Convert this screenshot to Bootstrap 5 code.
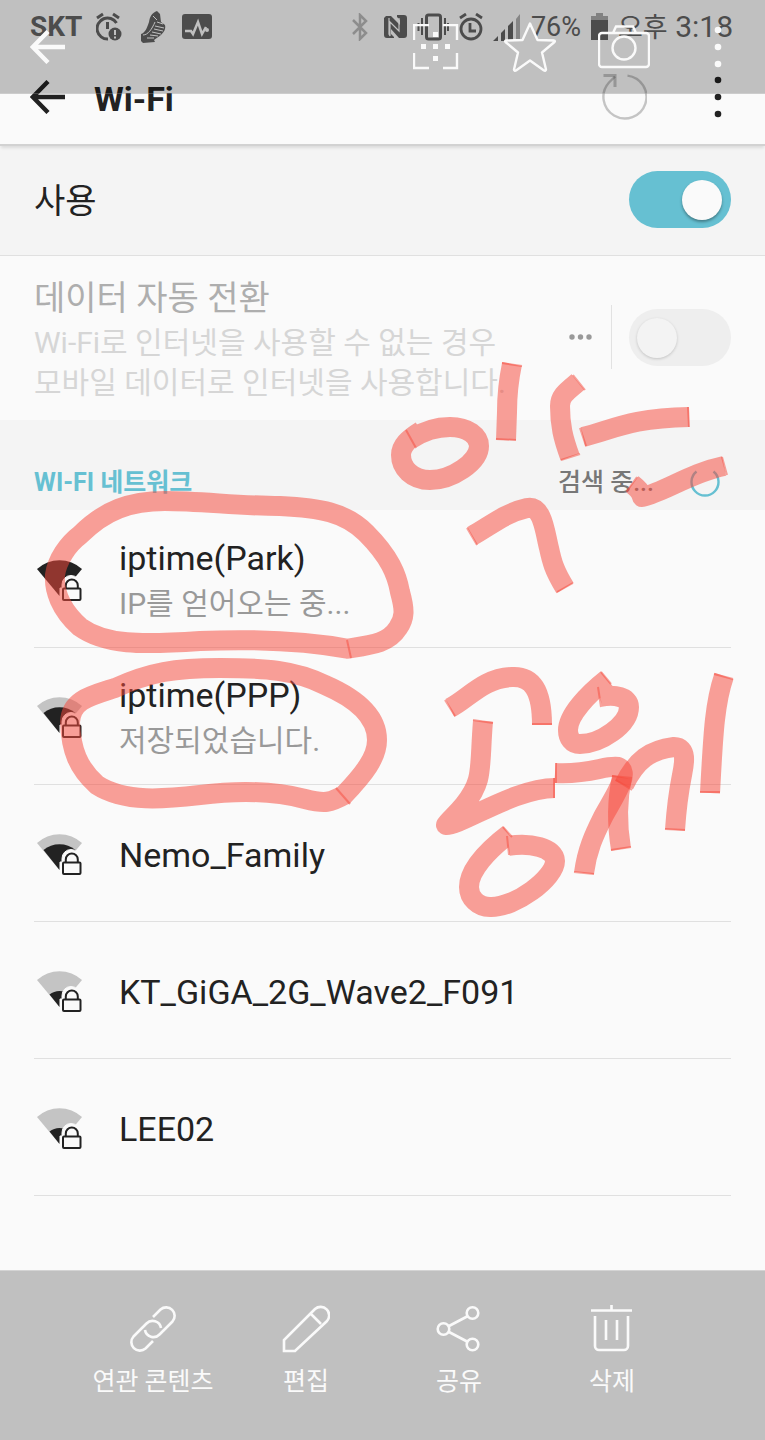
<!DOCTYPE html>
<html lang="ko">
<head>
<meta charset="utf-8">
<meta name="viewport" content="width=device-width, initial-scale=1">
<title>Wi-Fi</title>
<link rel="stylesheet" href="https://cdn.jsdelivr.net/npm/bootstrap@5.3.0/dist/css/bootstrap.min.css">
<style>
  body { font-family: Roboto, "Noto Sans CJK KR", sans-serif; background: #fafafa; color: #222; }
  svg { display: block; flex: none; }
  .status { height: 52px; padding: 2px 32px 0 30px; font-size: 30px; line-height: 50px; color: #646464; }
  .status-group { gap: 10px; }
  .carrier { font-size: 28px; margin-right: 4px; }
  .status-sm { font-size: 27px; }
  .appbar { height: 94px; padding: 0 0 2px 30px; border-bottom: 2px solid #d2d2d2; box-shadow: 0 3px 3px -1px rgba(0,0,0,.1); }
  .appbar h1 { font-size: 34px; line-height: 40px; margin-left: 29px; padding-top: 4px; }
  .viewer-top { height: 94px; padding-left: 30px; background: rgba(0,0,0,.232); z-index: 2; color: #fafafa; border-bottom: 1px solid rgba(255,255,255,.2); }
  .bar-btn { width: 94px; color: inherit; }
  .plain-btn { color: inherit; background: none; border: 0; padding: 0; }
  .main-row { height: 110px; padding: 0 34px 2px; background: #f4f4f4; border-bottom: 1px solid #e0e0e0; }
  .main-row .t-title { padding-top: 3px; }
  .t-title { font-size: 34px; line-height: 46px; }
  .t-sub { font-size: 30px; line-height: 40px; }
  .data-row { height: 164px; padding: 0 34px 2px; }
  .data-row label { padding-top: 4px; }
  .data-row .t-title { color: #aeaeae; }
  .data-row .t-sub { color: #d6d6d6; padding-top: 2px; }
  .split { width: 1px; height: 64px; background: #e2e2e2; margin: 0 17px 0 18px; }
  .form-check-input.toggle { appearance: none; width: 102px; height: 57px; margin: 0; border: 0; border-radius: 29px; background: #eee; position: relative; flex: none; opacity: 1; }
  .toggle::before { content: ""; position: absolute; top: 9px; left: 8px; width: 40px; height: 40px; border-radius: 50%; background: #f3f3f3; box-shadow: 0 1px 3px rgba(0,0,0,.18); }
  .form-check-input.toggle:checked { background: #66c0d2; }
  .toggle:checked::before { left: 53px; background: #fafafa; box-shadow: 0 2px 3px rgba(0,0,0,.35); }
  .section { height: 90px; padding: 35px 34px 0; background: #f4f4f4; font-size: 25px; line-height: 56px; }
  .section h2 { font-size: 25px; line-height: 56px; color: #66c0d2; }
  .searching { color: #777; font-weight: 500; }
  .searching svg { margin: 12px 11px 0 36px; }
  .networks { margin: 0 34px; padding-top: 1px; }
  .net { height: 137px; padding-left: 3px; border-bottom: 1px solid #e0e0e0; }
  .net a { color: inherit; gap: 36px; padding-top: 3px; }
  .net .t-sub { color: #999; line-height: 46px; }
  .viewer-bottom { background: #c0c0c0; height: 170px; padding: 34px 10% 0; border-top: 1px solid #d4d4d4; color: #fafafa; }
  .viewer-bottom .plain-btn { flex: 1 1 0; }
  .viewer-bottom span { font-size: 25px; line-height: 34px; margin-top: 12px; display: block; white-space: nowrap; }
  .ink { z-index: 1; pointer-events: none; }
</style>
</head>
<body>
<svg width="0" height="0" class="position-absolute" aria-hidden="true">
  <defs>
    <symbol id="back" viewBox="0 0 35 34"><path d="M2.8 17H35M18 1.5L2.8 17L18 32.500" fill="none" stroke="currentColor" stroke-width="4.400"/></symbol>
    <symbol id="dots" viewBox="0 0 26 42"><g fill="currentColor"><circle cx="13" cy="4" r="3.300"/><circle cx="13" cy="21" r="3.300"/><circle cx="13" cy="38" r="3.300"/></g></symbol>
    <symbol id="lock" viewBox="0 0 46 42">
      <path d="M25 28V24.500a9 9 0 0 1 18 0V28h2v14H23V28z" fill="#fafafa" stroke="#fafafa"/>
      <rect x="26" y="28.500" width="17.500" height="11.500" rx="1" fill="#fafafa" stroke="#222" stroke-width="2"/>
      <path d="M28.800 28v-2.500a6 6 0 0 1 12 0V28" fill="none" stroke="#222" stroke-width="2"/>
    </symbol>
  </defs>
</svg>

<div class="position-relative d-flex flex-column min-vh-100 overflow-hidden">

  <div class="status d-flex justify-content-between">
    <div class="status-group d-flex align-items-center">
      <strong class="carrier">SKT</strong>
      <svg width="28" height="30" viewBox="0 0 28 30" fill="none" stroke="currentColor" stroke-width="3"><path d="M20.500 11A10.500 10.500 0 1 0 12 27M1 6l6-4M17 2l6 4M11.500 10v7"/><circle cx="19" cy="22" r="6.500" fill="currentColor" stroke="none"/><path d="M19 18v5M19 24.500v2" stroke="#fafafa" stroke-width="2"/></svg>
      <svg width="30" height="34" viewBox="0 0 30 34" class="mx-1" fill="currentColor"><path d="M3 24c4-1 6-6 8-12C12 6 14 3 19 1l3 3 1 8 4 3c1 4-1 7-4 10l-7 5 1 2-12 1-2-2z"/><path d="M17 16l9 2M16 19l9 2M14 22l9 2M12 25l8 1M9 28l7 0M19 12l6 2M15 6l4 4M5 25c5 0 9-6 12-13" stroke="#fafafa" stroke-width="1" fill="none"/></svg>
      <svg width="30" height="26" viewBox="0 0 30 26"><rect width="30" height="25" rx="3" fill="currentColor"/><path d="M3 17h6l2 3 5-12 4 12 4-7" fill="none" stroke="#fafafa" stroke-width="2.500"/><circle cx="25" cy="16" r="2" fill="#fafafa"/></svg>
    </div>
    <div class="status-group d-flex align-items-center">
      <svg width="21" height="28" viewBox="0 0 21 28" fill="none" stroke="#b8b8b8" stroke-width="2.500"><path d="M1 7l13 13-6 6V2l6 6L1 21"/></svg>
      <svg width="24" height="24" viewBox="0 0 24 24"><path fill="currentColor" d="M3 1h5l9 9V5l-3-3V0h7a3 3 0 0 1 3 3v17a3 3 0 0 1-3 3h-5l-8-9v5l3 3v1H4a3 3 0 0 1-3-3V3z"/><path d="M6 3v16l1 2V7l9 9V3" fill="none" stroke="#fafafa" stroke-width="1.200"/></svg>
      <svg width="32" height="28" viewBox="0 0 32 28" fill="none" stroke="currentColor"><rect x="9.500" y="2" width="14" height="24" rx="2" stroke-width="3"/><path d="M5 5v17M1.500 10v8M28 5v17M31 10v8" stroke-width="2"/></svg>
      <svg width="24" height="28" viewBox="0 0 24 28" fill="none" stroke="currentColor" stroke-width="2.800"><circle cx="12" cy="16" r="10"/><path d="M11 10v8h6M1 5l6-4M17 1l6 4"/></svg>
      <svg class="me-n1" width="28" height="27" viewBox="0 0 28 27" fill="currentColor"><path d="M0 27l5-5v5zM8 19l4-4v12H8zM15 12l5-5v20h-5z"/><path d="M23 5l4-5v27h-4z" opacity=".5"/></svg>
      <span class="status-sm">76%</span>
      <svg width="17" height="28" viewBox="0 0 17 28" fill="currentColor"><path d="M5 0h7v3h5v5H0V3h5z" opacity=".55"/><path d="M0 7h17v20H0z"/></svg>
      <span><span class="status-sm">오후</span> 3:18</span>
    </div>
  </div>

  <header class="appbar position-relative d-flex align-items-center">
    <button class="plain-btn" aria-label="뒤로"><svg width="35" height="34"><use href="#back"/></svg></button>
    <h1 class="fw-bold mb-0">Wi-Fi</h1>
    <button class="plain-btn bar-btn ms-auto d-flex justify-content-center" aria-label="새로고침">
      <svg width="46" height="46" viewBox="0 0 46 46" fill="none" stroke="#222" stroke-opacity=".25" stroke-width="2.400"><path d="M26.500 1.600A21.500 21.500 0 1 1 8 8.500L14 2.500"/><path d="M2.500 1.500H14v11.500" stroke-width="3"/></svg>
    </button>
    <button class="plain-btn bar-btn d-flex justify-content-center" aria-label="더보기"><svg width="26" height="42"><use href="#dots"/></svg></button>
  </header>

  <div class="viewer-top position-absolute top-0 start-0 w-100 d-flex align-items-center">
    <button class="plain-btn me-auto" aria-label="갤러리로 돌아가기"><svg width="35" height="34"><use href="#back"/></svg></button>
    <button class="plain-btn bar-btn d-flex justify-content-center" aria-label="영역 선택">
      <svg width="46" height="46" viewBox="0 0 46 46"><path d="M1 16V1h15M30 1h14v15M1 29v15h15M30 44h14V29" fill="none" stroke="currentColor" stroke-width="2.400"/><path d="M20 8h5v5h-5zM8 20h5v5H8zM20 20h5v5h-5zM32 20h5v5h-5zM20 32h5v5h-5z" fill="currentColor"/></svg>
    </button>
    <button class="plain-btn bar-btn d-flex justify-content-center" aria-label="즐겨찾기">
      <svg width="52" height="50" viewBox="0 0 52 50"><path d="M26 1.500l7.500 16.500 16.500.5c1 0 1 1 .5 1.500L38 30.500l4 17c0 1-1 1.500-2 1L26 38.500 12 48.500c-1 .5-2 0-2-1l4-17L1.500 20c-.5-.5-.5-1.500.5-1.500L18.500 18z" fill="none" stroke="currentColor" stroke-width="2.400" stroke-linejoin="round"/></svg>
    </button>
    <button class="plain-btn bar-btn d-flex justify-content-center" aria-label="카메라">
      <svg width="52" height="44" viewBox="0 0 52 44" fill="none" stroke="currentColor" stroke-width="2.400"><path d="M4 8h11l3-6.500h17L38 8h10a3 3 0 0 1 3 3v28a3 3 0 0 1-3 3H4a3 3 0 0 1-3-3V11a3 3 0 0 1 3-3zM15 8h23"/><circle cx="26" cy="23" r="11.500"/></svg>
    </button>
    <button class="plain-btn bar-btn d-flex justify-content-center" aria-label="메뉴"><svg width="26" height="42"><use href="#dots"/></svg></button>
  </div>

  <main class="flex-grow-1">
    <div class="main-row d-flex align-items-center justify-content-between">
      <label class="t-title" for="useWifi">사용</label>
      <input class="form-check-input toggle" type="checkbox" role="switch" id="useWifi" checked>
    </div>

    <div class="data-row d-flex align-items-center">
      <label class="me-auto" for="autoData">
        <span class="t-title d-block">데이터 자동 전환</span>
        <span class="t-sub d-block">Wi-Fi로 인터넷을 사용할 수 없는 경우<br>모바일 데이터로 인터넷을 사용합니다.</span>
      </label>
      <button class="plain-btn" aria-label="자세히"><svg width="24" height="6" viewBox="0 0 24 6" fill="#999"><circle cx="3" cy="3" r="2.700"/><circle cx="11.500" cy="3" r="2.700"/><circle cx="20" cy="3" r="2.700"/></svg></button>
      <div class="split"></div>
      <input class="form-check-input toggle" type="checkbox" role="switch" id="autoData" disabled>
    </div>

    <div class="section d-flex justify-content-between">
      <h2 class="fw-bold mb-0">WI-FI 네트워크</h2>
      <div class="searching d-flex align-items-start"><span>검색 중...</span>
        <svg width="30" height="30" viewBox="0 0 30 30" fill="none" stroke-width="2.400"><path d="M6.500 4.500A13.500 13.500 0 1 0 23.500 4.500" stroke="#66c0d2"/></svg>
      </div>
    </div>

    <ul class="networks list-unstyled mb-0">
      <li class="net"><a href="#" class="d-flex align-items-center h-100 text-decoration-none">
        <svg width="46" height="42" viewBox="0 0 46 42"><path d="M22.500 36L0 9A33 33 0 0 1 45 9z" fill="#222"/><use href="#lock"/></svg>
        <span><span class="t-title d-block">iptime(Park)</span><span class="t-sub d-block">IP를 얻어오는 중...</span></span></a></li>
      <li class="net"><a href="#" class="d-flex align-items-center h-100 text-decoration-none">
        <svg width="46" height="42" viewBox="0 0 46 42"><path d="M22.500 36L0 9A33 33 0 0 1 45 9z" fill="#c4c4c4"/><path d="M22.500 36L6.500 16A25 25 0 0 1 38.500 16z" fill="#222"/><use href="#lock"/></svg>
        <span><span class="t-title d-block">iptime(PPP)</span><span class="t-sub d-block">저장되었습니다.</span></span></a></li>
      <li class="net"><a href="#" class="d-flex align-items-center h-100 text-decoration-none">
        <svg width="46" height="42" viewBox="0 0 46 42"><path d="M22.500 36L0 9A33 33 0 0 1 45 9z" fill="#c4c4c4"/><path d="M22.500 36L6.500 16A25 25 0 0 1 38.500 16z" fill="#222"/><use href="#lock"/></svg>
        <span class="t-title">Nemo_Family</span></a></li>
      <li class="net"><a href="#" class="d-flex align-items-center h-100 text-decoration-none">
        <svg width="46" height="42" viewBox="0 0 46 42"><path d="M22.500 36L0 9A33 33 0 0 1 45 9z" fill="#c4c4c4"/><path d="M22.500 36L12.500 23.500A16 16 0 0 1 32.500 23.500z" fill="#222"/><use href="#lock"/></svg>
        <span class="t-title">KT_GiGA_2G_Wave2_F091</span></a></li>
      <li class="net"><a href="#" class="d-flex align-items-center h-100 text-decoration-none">
        <svg width="46" height="42" viewBox="0 0 46 42"><path d="M22.500 36L0 9A33 33 0 0 1 45 9z" fill="#c4c4c4"/><path d="M22.500 36L12.500 23.500A16 16 0 0 1 32.500 23.500z" fill="#222"/><use href="#lock"/></svg>
        <span class="t-title">LEE02</span></a></li>
    </ul>
  </main>

  <nav class="viewer-bottom d-flex align-items-start">
    <button class="plain-btn"><svg class="mx-auto" width="48" height="48" viewBox="0 0 48 48" fill="none" stroke="currentColor" stroke-width="2.600"><path d="M24 12L31.500 4.500A8.500 8.500 0 0 1 43.500 16.500L30.500 29.500A8.500 8.500 0 0 1 16 25"/><path d="M24 36L16.500 43.500A8.500 8.500 0 0 1 4.500 31.500L17.500 18.500A8.500 8.500 0 0 1 32 23"/></svg><span>연관 콘텐츠</span></button>
    <button class="plain-btn"><svg class="mx-auto" width="48" height="48" viewBox="0 0 48 48" fill="none" stroke="currentColor" stroke-width="2.600"><path d="M2 46V35L33 4a8.500 8.500 0 0 1 12 12L13 46zM29 9l10 10"/></svg><span>편집</span></button>
    <button class="plain-btn"><svg class="mx-auto" width="48" height="48" viewBox="0 0 48 48" fill="none" stroke="currentColor" stroke-width="2.600"><circle cx="8.500" cy="24" r="5.800"/><circle cx="37.500" cy="8" r="5.800"/><circle cx="37.500" cy="39.500" r="5.800"/><path d="M14 21l19-10M14 27l19 10"/></svg><span>공유</span></button>
    <button class="plain-btn"><svg class="mx-auto" width="48" height="48" viewBox="0 0 48 48" fill="none" stroke="currentColor" stroke-width="2.600"><path d="M3 5.500h41M23.500 0v5M7 11v30a4 4 0 0 0 4 4h25a4 4 0 0 0 4-4V11M18 15v20M29 15v20"/></svg><span>삭제</span></button>
  </nav>

  <!-- pen strokes drawn over the list -->
  <svg class="ink position-absolute top-0 start-0" width="765" height="1440" viewBox="0 0 765 1440" fill="none" aria-hidden="true">
    <g stroke="#f6493c" stroke-opacity=".52" stroke-width="20" stroke-linejoin="round">
      <path d="M349 649C300 640 250 639 200 641C140 645 105 645 80 627C60 609 54 590 55 575C57 560 68 544 80 535C105 510 130 501 165 501C200 501 240 506 280 506C320 508 345 512 366 533C390 557 397 575 400 592C405 610 405 618 398 628C388 644 370 645 345 649"/>
      <path d="M343 796C365 773 377 757 377 740C377 715 355 698 325 685C295 670 265 668 220 668C175 668 150 672 115 688C90 696 71 700 70 722C71 750 78 768 97 785C125 803 165 799 200 795C240 790 275 791 305 799C325 804 330 803 346 794"/>
      <path d="M411 439C425 430 438 427 450 427C468 427 479 436 479 446C479 462 452 480 430 480C412 480 401 468 401 455C401 446 408 439 421 431"/>
      <path d="M512 364C507 388 507 400 507 412L506 440"/>
      <path d="M578 382C566 392 560 396 560 406C560 425 563 438 570 457"/>
      <path d="M583 437C612 430 630 418 689 417"/>
      <path d="M632 484C637 488 641 491 642 497C665 492 690 473 724 466"/>
      <path d="M472 536C490 526 505 513 527 508C543 505 545 533 549 548C552 562 554 570 565 588"/>
      <path d="M450 708C468 699 483 678 512 677C532 676 542 690 542 725"/>
      <path d="M483 721C479 770 484 780 464 805C455 816 449 820 446 825C460 826 515 788 555 788"/>
      <path d="M508 846C530 842 555 848 555 861C555 878 515 908 490 907C478 907 469 898 469 887C469 870 488 850 509 834"/>
      <path d="M600 697C615 694 629 697 629 707C629 725 600 744 580 744C572 744 568 738 568 730C568 715 588 694 607 679"/>
      <path d="M555 773C590 775 605 765 618 767C632 772 612 800 603 817C594 835 587 850 584 873"/>
      <path d="M622 777C617 800 617 825 621 849"/>
      <path d="M624 785C636 760 650 750 674 747C688 747 684 765 682 775C678 795 676 815 675 830"/>
      <path d="M724 676C714 705 713 740 710 793"/>
    </g>
    <g stroke="#f6493c" stroke-opacity=".5" stroke-width="2">
      <path d="M347 640l4 18M336 788l14 16M406 430l10 18M502 363l20 3M496 439l20 1M573 375l12 15M561 460l19-6M580 428l6 18M688 407l1 20M637 477l-10 14M722 457l5 18M467 528l10 17M557 592l16-9M445 700l10 16M532 724h20M473 720l20 3M554 778v20M507 836l2 19M503 827l9 10M598 687l3 20M601 672l10 12M556 763v20M574 872l20 2M612 776l20 2M611 850l20-3M616 780l16 10M665 829l20 1M714 674l19 5M700 792h20"/>
    </g>
  </svg>
</div>
<script src="https://cdn.jsdelivr.net/npm/bootstrap@5.3.0/dist/js/bootstrap.bundle.min.js"></script>
</body>
</html>
